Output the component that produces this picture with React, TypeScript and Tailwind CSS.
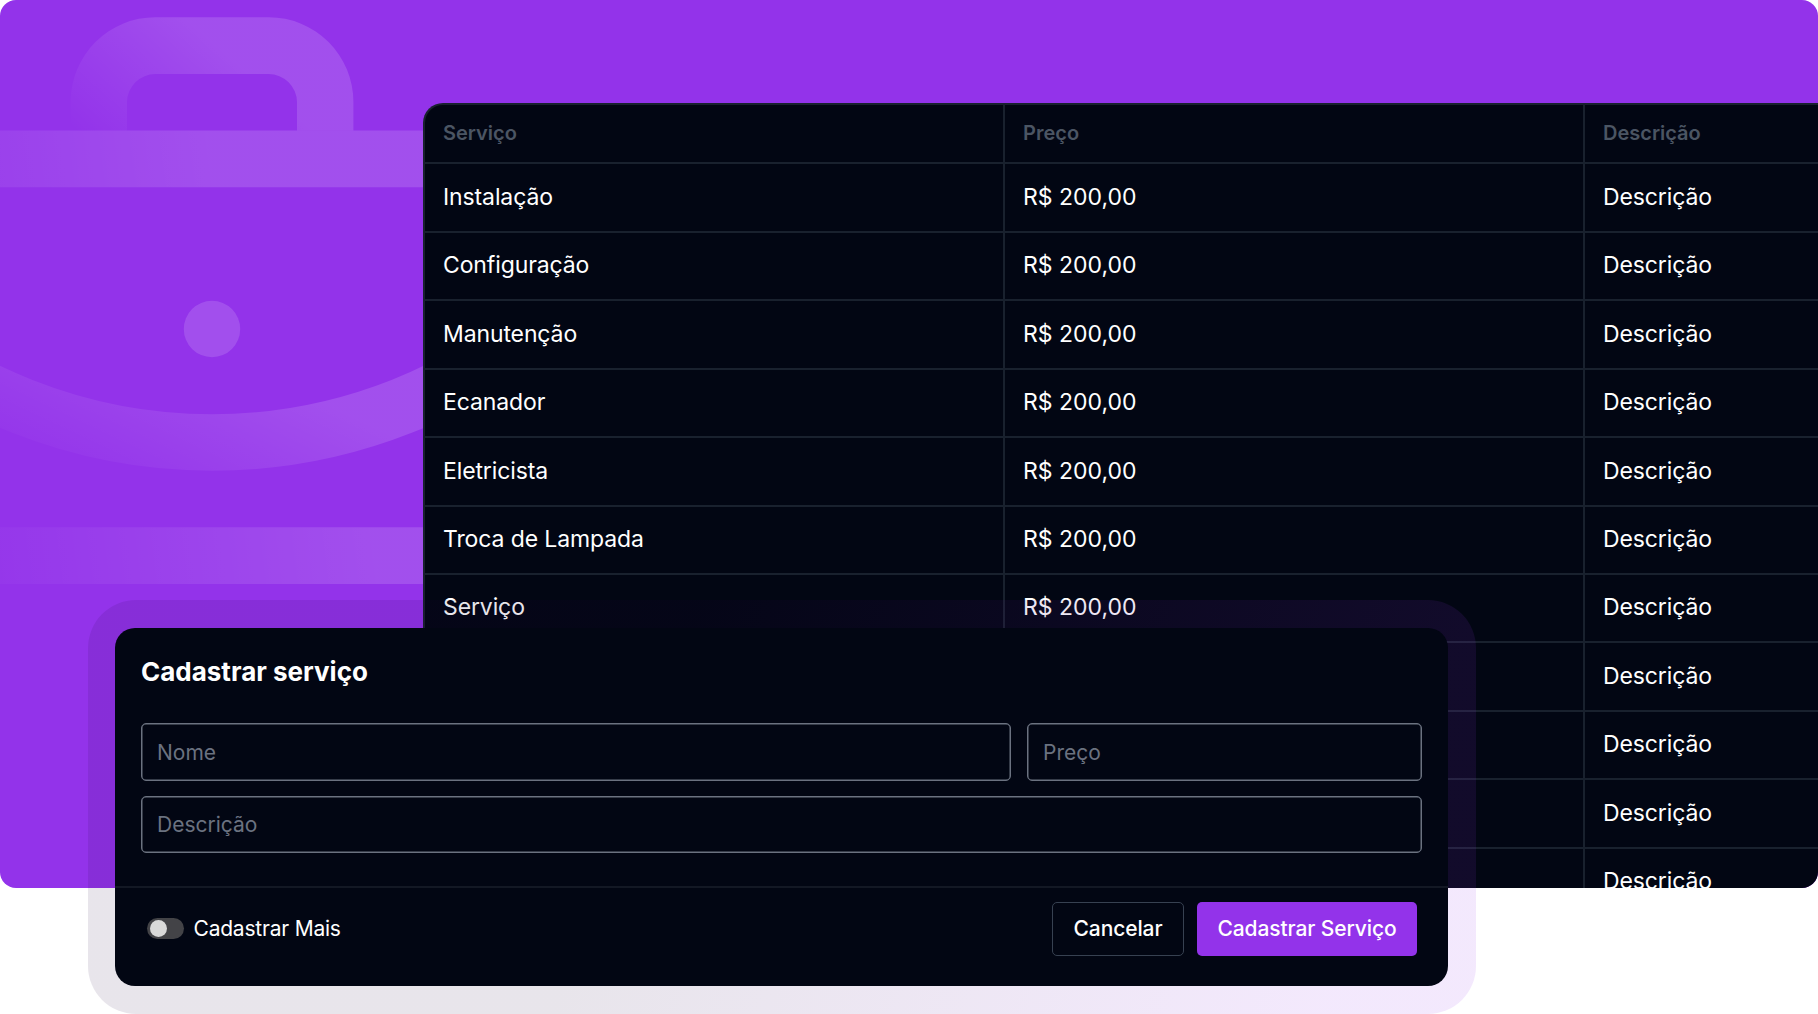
import React from "react";

const services = [
  { name: "Instalação", price: "R$ 200,00" },
  { name: "Configuração", price: "R$ 200,00" },
  { name: "Manutenção", price: "R$ 200,00" },
  { name: "Ecanador", price: "R$ 200,00" },
  { name: "Eletricista", price: "R$ 200,00" },
  { name: "Troca de Lampada", price: "R$ 200,00" },
  { name: "Serviço", price: "R$ 200,00" },
  { name: "", price: "" },
  { name: "", price: "" },
  { name: "", price: "" },
  { name: "", price: "" },
];

const columns = "grid shrink-0 grid-cols-[578px_580px_580px] border-b-2 border-[#19212e]";

function BriefcaseArt() {
  return (
    <svg className="absolute left-0 top-0" width="430" height="620" viewBox="0 0 430 620" fill="none">
      <defs>
        <linearGradient id="handle" gradientUnits="userSpaceOnUse" x1="77" y1="132" x2="180" y2="15">
          <stop stopColor="#fff" stopOpacity="0" />
          <stop offset="1" stopColor="#fff" stopOpacity="0.14" />
        </linearGradient>
        <linearGradient id="lid" gradientUnits="userSpaceOnUse" x1="-220" y1="187" x2="205" y2="131">
          <stop stopColor="#fff" stopOpacity="0" />
          <stop offset="1" stopColor="#fff" stopOpacity="0.14" />
        </linearGradient>
        <linearGradient id="flap" gradientUnits="userSpaceOnUse" x1="-10" y1="455" x2="70" y2="285">
          <stop stopColor="#fff" stopOpacity="0" />
          <stop offset="1" stopColor="#fff" stopOpacity="0.14" />
        </linearGradient>
        <linearGradient id="base" gradientUnits="userSpaceOnUse" x1="-70" y1="584" x2="370" y2="530">
          <stop stopColor="#fff" stopOpacity="0" />
          <stop offset="1" stopColor="#fff" stopOpacity="0.14" />
        </linearGradient>
      </defs>
      <path
        d="M70.6 130.6V102A84.8 84.8 0 0 1 155.4 17.2H268.6A84.8 84.8 0 0 1 353.4 102V130.6H297V102A28.3 28.3 0 0 0 268.7 74H155.3A28.3 28.3 0 0 0 127 102V130.6Z"
        fill="url(#handle)"
      />
      <path d="M0 130.6H430V187.3H0Z" fill="url(#lid)" />
      <circle cx="212" cy="329" r="28.2" fill="#fff" fillOpacity="0.14" />
      <circle cx="212" cy="-73.5" r="516" stroke="url(#flap)" strokeWidth="56.6" />
      <path d="M0 527.2H430V584H0Z" fill="url(#base)" />
    </svg>
  );
}

function ServiceTable() {
  const head = "flex items-center border-l-2 border-[#19212e] pb-px pl-[18px]";
  const cell = "flex items-center border-l-2 border-[#19212e] pb-px pl-[18px]";
  return (
    <div className="relative flex h-[900px] w-[1744px] flex-col overflow-hidden rounded-tl-[20px] border-l-2 border-t-2 border-[#19212e] bg-[#020613] text-[23px]">
      <div className={`${columns} h-[59.4px] text-[20px] font-semibold text-[#4b5563]`}>
        <div className="flex items-center pb-px pl-[18px]">Serviço</div>
        <div className={head}>Preço</div>
        <div className={head}>Descrição</div>
      </div>
      {services.map(({ name, price }, i) => (
        <div key={i} className={`${columns} h-[68.44px]`}>
          <div className="flex items-center pb-px pl-[18px] tracking-[-0.005em]">{name}</div>
          <div className={cell}>{price}</div>
          <div className={`${cell} tracking-[-0.005em]`}>Descrição</div>
        </div>
      ))}
    </div>
  );
}

function Field({ label, className }: { label: string; className: string }) {
  return (
    <div className={`flex items-center rounded-[5px] border border-[#6b7280] pl-[15px] text-[21px] text-[#6b7280] shadow-[inset_0_0_0_0.5px_#6b7280] ${className}`}>
      {label}
    </div>
  );
}

function ServiceForm() {
  return (
    <div className="absolute left-[87.5px] top-[600.4px] h-[413.5px] w-[1388.5px] rounded-[48px] bg-[linear-gradient(110deg,rgba(30,0,60,0.1)_40%,rgba(147,51,234,0.11)_90%)] px-[27.5px] py-[28px]">
      <div className="flex h-[357.5px] w-[1333px] flex-col rounded-[20px] bg-[#020613]">
        <div className="flex h-[257.6px] flex-col pl-[26px] pr-[26px]">
          <h2 className="mt-[26px] text-[26px] font-bold leading-[36px]">Cadastrar serviço</h2>
          <div className="mt-[33px] flex gap-4">
            <Field label="Nome" className="h-[58px] w-[870px]" />
            <Field label="Preço" className="h-[58px] flex-1" />
          </div>
          <Field label="Descrição" className="mt-[15px] h-[57px]" />
        </div>
        <div className="flex h-[84px] items-center border-t-2 border-[#131824] pl-[32px] pr-[31px] text-[21px]">
          <div className="flex h-[21px] w-[37px] items-center rounded-full bg-[#434347] pl-[2.5px]">
            <div className="size-[17px] rounded-full bg-[#d9d9d9]" />
          </div>
          <span className="ml-[9.5px] tracking-[-0.01em]">Cadastrar Mais</span>
          <button className="ml-auto flex h-[54px] w-[132px] items-center justify-center rounded-[5px] border border-[#374151] font-medium tracking-[-0.005em]">
            Cancelar
          </button>
          <button className="ml-[13px] flex h-[54px] w-[220px] items-center justify-center rounded-[5px] bg-[#9333ea] font-medium tracking-[-0.005em]">
            Cadastrar Serviço
          </button>
        </div>
      </div>
    </div>
  );
}

export default function App() {
  return (
    <div className="relative h-[1014px] w-[1818px] overflow-hidden bg-white font-['Inter',sans-serif] text-white">
      <div className="relative h-[888px] overflow-hidden rounded-[16px] bg-[#9333ea] pl-[423px] pt-[103px]">
        <BriefcaseArt />
        <ServiceTable />
      </div>
      <ServiceForm />
    </div>
  );
}
